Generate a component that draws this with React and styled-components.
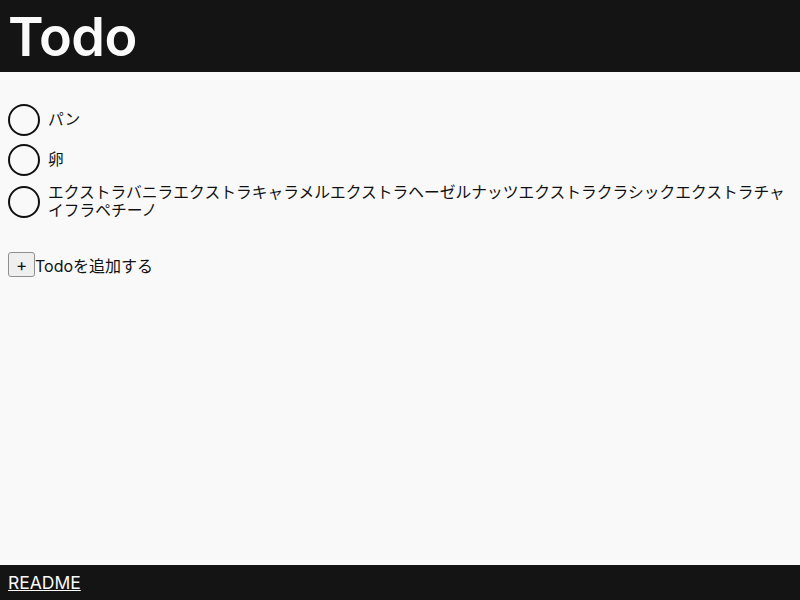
import styled, { createGlobalStyle } from 'styled-components';

const GlobalStyle = createGlobalStyle`
  html, body {
    margin: 0;
    padding: 0;
    background: #f9f9f9;
    font-family: Inter, "Noto Sans CJK JP", sans-serif;
    color: #111;
  }
  #root {
    min-height: 100vh;
    display: flex;
    flex-direction: column;
  }
`;

const Header = styled.header`
  background: #141414;
  color: #fafafa;
  height: 72px;
  padding: 0 8px;
  display: flex;
  align-items: center;
`;
const Title = styled.h1`
  margin: 0;
  font-size: 54px;
  font-weight: 600;
  letter-spacing: -0.5px;
`;
const Main = styled.main`
  flex: 1;
  padding: 32px 8px 0;
`;
const List = styled.ul`
  list-style: none;
  margin: 0;
  padding: 0;
  display: flex;
  flex-direction: column;
  gap: 8px;
`;
const Item = styled.li`
  display: flex;
  align-items: center;
  gap: 8px;
  font-size: 15.75px;
  line-height: 18px;
`;
const Check = styled.button`
  flex: none;
  width: 32px;
  height: 32px;
  border-radius: 50%;
  border: 2px solid #111;
  background: transparent;
  padding: 0;
`;
const AddRow = styled.div`
  display: flex;
  align-items: center;
  margin-top: 32px;
  font-size: 16px;
`;
const AddButton = styled.button`
  font-family: Inter, sans-serif;
  font-size: 17px;
  line-height: 1;
  height: 25px;
  width: 27px;
  padding: 2px 0 0;
  border: 1px solid #8f8f8f;
  border-radius: 3px;
  background: #efefef;
  color: #111;
`;
const Footer = styled.footer`
  background: #141414;
  height: 35px;
  padding: 0 8px;
  display: flex;
  align-items: center;
`;
const Link = styled.a`
  color: #fafafa;
  font-size: 17.5px;
  text-decoration: underline;
`;

const todos = [
  'パン',
  '卵',
  'エクストラバニラエクストラキャラメルエクストラヘーゼルナッツエクストラクラシックエクストラチャイフラペチーノ',
];

export default function App() {
  return (
    <>
      <GlobalStyle />
      <Header>
        <Title>Todo</Title>
      </Header>
      <Main>
        <List>
          {todos.map((t) => (
            <Item key={t}>
              <Check aria-label='完了' />
              <span>{t}</span>
            </Item>
          ))}
        </List>
        <AddRow>
          <AddButton>+</AddButton>
          <span>Todoを追加する</span>
        </AddRow>
      </Main>
      <Footer>
        <Link href='#'>README</Link>
      </Footer>
    </>
  );
}
